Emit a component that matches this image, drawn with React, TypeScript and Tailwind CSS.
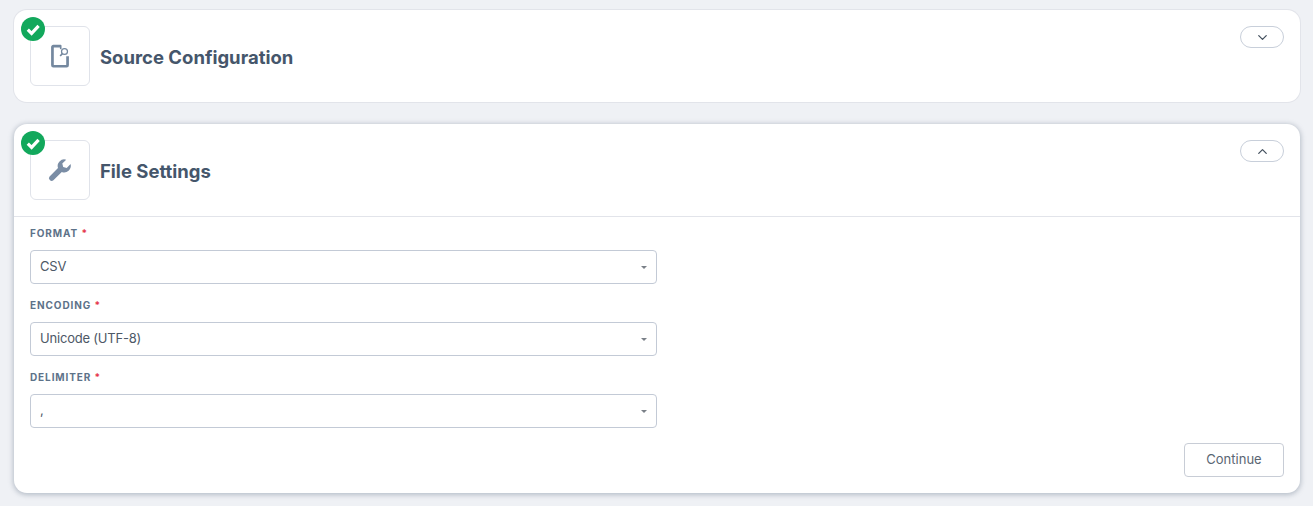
import { ChevronDown, ChevronUp } from 'lucide-react';
import type { ReactNode } from 'react';

function CheckBadge() {
  return (
    <div className="absolute left-[7px] top-[7px] h-6 w-6 rounded-full bg-[#12a85c]">
      <svg width="24" height="24" viewBox="0 0 24 24" fill="none">
        <path d="M6.8 12.6l3.8 3.8 7-7.6" stroke="#fff" strokeWidth="3.2" />
      </svg>
    </div>
  );
}

function FileSearchIcon() {
  return (
    <svg width="18" height="24" viewBox="0 0 20 26" fill="none">
      <path
        d="M11 2H2.6a1 1 0 0 0-1 1v20.4a1 1 0 0 0 1 1h14.8a1 1 0 0 0 1-1V13.4"
        stroke="#74889f"
        strokeWidth="3"
      />
      <path d="M10.8 1v4.4" stroke="#74889f" strokeWidth="1.8" />
      <circle cx="15" cy="8" r="3.3" stroke="#74889f" strokeWidth="1.4" />
      <path d="M12.6 10.4l-2.4 2.6" stroke="#74889f" strokeWidth="1.8" />
    </svg>
  );
}

function WrenchIcon() {
  return (
    <svg width="24" height="24" viewBox="0 0 24 24" fill="none">
      <path
        d="M22.6 6.1l-3.9 3.9-3.5-.9-.9-3.5L18.2 1.7a6.6 6.6 0 0 0-8.2 8.4L1.6 18.5a2.7 2.7 0 0 0 3.8 3.8l8.4-8.4a6.6 6.6 0 0 0 8.8-7.8z"
        fill="#7a8da5"
      />
    </svg>
  );
}

function CardHeader({ title, icon, open }: { title: string; icon: ReactNode; open: boolean }) {
  return (
    <div className="relative flex items-center gap-[10px] p-4">
      <CheckBadge />
      <div className="flex h-[60px] w-[60px] items-center justify-center rounded-[6px] border border-[#e0e3ea]">
        {icon}
      </div>
      <h2 className="mt-[3px] text-[18.5px] font-bold text-[#45566b]">{title}</h2>
      <button className="absolute right-4 top-4 flex h-[22px] w-[44px] items-center justify-center rounded-full border border-[#c8cfda] text-[#44505e]">
        {open ? <ChevronUp size={15} strokeWidth={2} /> : <ChevronDown size={15} strokeWidth={2} />}
      </button>
    </div>
  );
}

function SelectField({ label, value }: { label: string; value: string }) {
  return (
    <div className="mb-[14px]">
      <label className="mb-[10px] block h-[14px] text-[10px] leading-[14px] font-bold tracking-[0.9px] text-[#5d7289]">
        {label} <span className="text-[#e5364b]">*</span>
      </label>
      <div className="flex h-[34px] w-[627px] items-center justify-between rounded-[4px] border border-[#c3cad6] bg-white px-[9px] text-[13px] tracking-[-0.2px] text-[#4d5866]">
        <span>{value}</span>
        <span className="mt-[1px] h-0 w-0 border-x-[3px] border-t-[3px] border-x-transparent border-t-[#7a8088]" />
      </div>
    </div>
  );
}

export default function App() {
  return (
    <div className="flex h-[506px] flex-col gap-[22px] overflow-hidden bg-[#eff1f5] pl-[14px] pr-[13px] pt-[10px] font-['Inter','Liberation_Sans',sans-serif]">
      <section className="rounded-[13px] bg-white shadow-[0_0_0_1px_#e2e4ea]">
        <CardHeader title="Source Configuration" icon={<FileSearchIcon />} open={false} />
      </section>

      <section className="rounded-[13px] bg-white shadow-[0_1px_5px_1px_rgba(100,115,135,0.4)]">
        <div className="border-b border-[#e2e4ea]">
          <CardHeader title="File Settings" icon={<WrenchIcon />} open />
        </div>
        <div className="px-4 pb-4 pt-[9px]">
          <SelectField label="FORMAT" value="CSV" />
          <SelectField label="ENCODING" value="Unicode (UTF-8)" />
          <SelectField label="DELIMITER" value="," />
          <div className="flex justify-end pt-[1px]">
            <button className="h-[34px] w-[100px] rounded-[4px] border border-[#c8cdd6] text-[13px] text-[#5a6673]">
              Continue
            </button>
          </div>
        </div>
      </section>
    </div>
  );
}
